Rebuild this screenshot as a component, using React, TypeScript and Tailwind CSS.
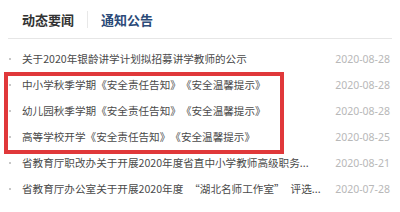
import React from "react";

const rows: { t: React.ReactNode; d: string }[] = [
  { t: "关于2020年银龄讲学计划拟招募讲学教师的公示", d: "2020-08-28" },
  { t: "中小学秋季学期《安全责任告知》《安全温馨提示》", d: "2020-08-28" },
  { t: "幼儿园秋季学期《安全责任告知》《安全温馨提示》", d: "2020-08-28" },
  { t: "高等学校开学《安全责任告知》《安全温馨提示》", d: "2020-08-25" },
  { t: "省教育厅职改办关于开展2020年度省直中小学教师高级职务...", d: "2020-08-21" },
  {
    t: (
      <>
        省教育厅办公室关于开展2020年度<span className="ml-[6px]">“</span>湖北名师工作室<span className="mr-[6px]">”</span>评选...
      </>
    ),
    d: "2020-07-28",
  },
];

export default function App() {
  return (
    <div
      lang="zh-CN"
      className="relative w-[400px] h-[212px] bg-white overflow-hidden [text-spacing-trim:space-all]"
      style={{ fontFamily: '"Noto Sans CJK SC", "Noto Sans", sans-serif' }}
    >
      <div className="mx-[8px] h-[39px] border-b border-[#e6e6e6] flex items-center pl-[14px]">
        <span className="text-[13px] font-bold text-[#333] leading-none">动态要闻</span>
        <span className="mx-[13px] w-px h-[17px] bg-[#e8e8e8]" />
        <span className="text-[13px] font-bold text-[#2b4a78] leading-none">通知公告</span>
      </div>
      <div className="pt-[7px]">
        {rows.map((r, i) => (
          <div key={i} className="h-[26px] flex items-center pl-[9px] pr-[10px]">
            <span className="w-[2px] h-[2px] bg-[#c8c8c8] mr-[11px]" />
            <span className="flex-1 text-[10.6px] text-[#4a4a4a] whitespace-nowrap leading-none">{r.t}</span>
            <span className="text-[10.5px] text-[#b8b8b8] leading-none" style={{ fontFamily: '"Noto Sans", sans-serif' }}>{r.d}</span>
          </div>
        ))}
      </div>
      <div className="absolute left-[4px] top-[72px] w-[280px] h-[82px] border-[4px] border-[#e0383a] pointer-events-none" />
    </div>
  );
}
